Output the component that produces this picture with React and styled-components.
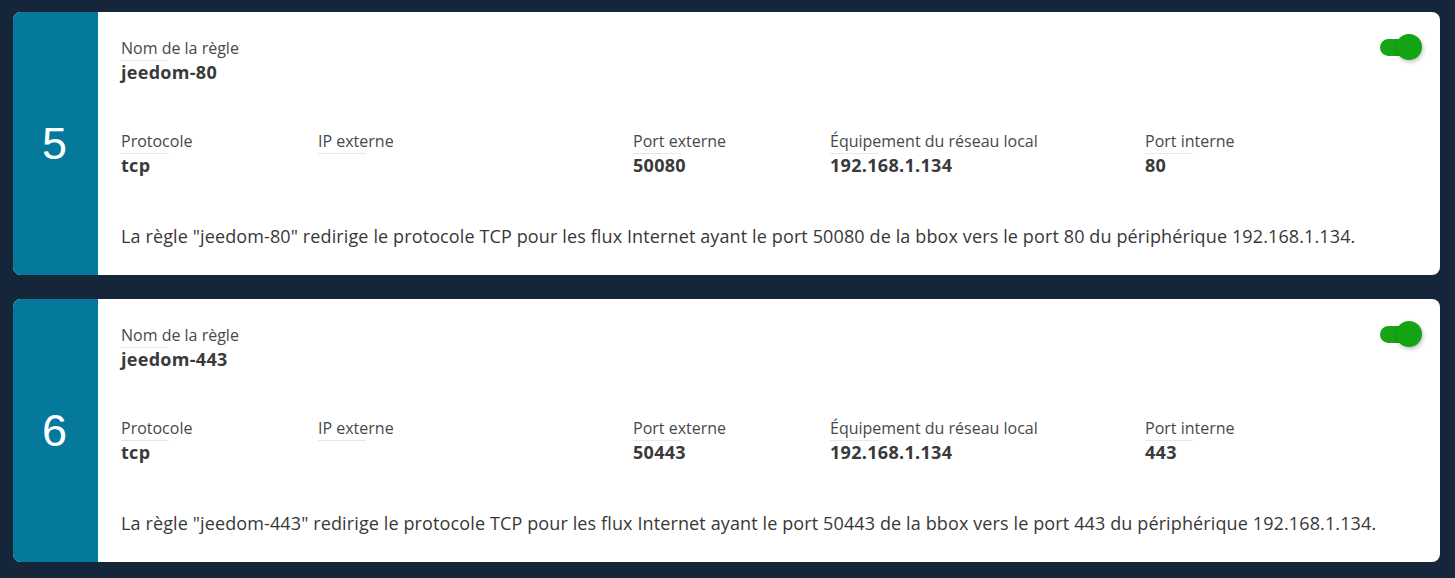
import styled, { createGlobalStyle } from "styled-components";

const GlobalStyle = createGlobalStyle`
  html, body {
    margin: 0;
    padding: 0;
    background: #15263a;
    font-family: "Open Sans", Lato, sans-serif;
  }
`;

const rules = [
  { id: 5, name: "jeedom-80", protocol: "tcp", ipExt: "", portExt: "50080", device: "192.168.1.134", portInt: "80" },
  { id: 6, name: "jeedom-443", protocol: "tcp", ipExt: "", portExt: "50443", device: "192.168.1.134", portInt: "443" },
];

const Page = styled.div`
  display: flex;
  flex-direction: column;
  gap: 24px;
  padding: 12px 15px 16px 13px;
`;

const Card = styled.div`
  display: flex;
  height: 263px;
  background: #fff;
  border-radius: 8px;
  overflow: hidden;
`;

const Band = styled.div`
  width: 83px;
  flex-shrink: 0;
  background: #04799b;
  color: #fff;
  display: flex;
  align-items: center;
  justify-content: center;
  font-family: "Liberation Sans", Arial, sans-serif;
  font-size: 45px;
  padding-right: 2px;
`;

const Body = styled.div`
  position: relative;
  flex: 1;
  padding: 26px 25px 0 23px;
`;

const Grid = styled.div`
  display: grid;
  grid-template-columns: 197px 315px 197px 315px 1fr;
  margin-top: ${({ $top }) => $top || 0}px;
`;

const Field = styled.div`
  display: flex;
  flex-direction: column;
`;

const Label = styled.span`
  position: relative;
  font-size: 16px;
  color: #484848;
  line-height: 20px;
  padding-bottom: 3px;

  &::after {
    content: "";
    position: absolute;
    left: 0;
    bottom: 0;
    width: 48px;
    height: 1px;
    background: #e8e8e8;
  }
`;

const Value = styled.span`
  font-size: 18px;
  font-weight: 700;
  color: #3a3a3a;
  line-height: 22px;
  min-height: 22px;
  letter-spacing: 0.3px;
`;

const Sentence = styled.p`
  margin: 48px 0 0;
  font-size: 18px;
  line-height: 24px;
  color: #383838;
  letter-spacing: 0.12px;
`;

const Toggle = styled.div`
  position: absolute;
  top: 22px;
  right: 18px;
  width: 42px;
  height: 26px;
`;

const Track = styled.span`
  position: absolute;
  left: 0;
  top: 5px;
  width: 34px;
  height: 17px;
  border-radius: 9px;
  background: #17a417;
`;

const Knob = styled.span`
  position: absolute;
  right: 0;
  top: 0;
  width: 26px;
  height: 26px;
  border-radius: 50%;
  background: #13a313;
  box-shadow: 1px 2px 4px rgba(0, 0, 0, 0.25);
`;

const Rule = ({ r }) => (
  <Card>
    <Band>{r.id}</Band>
    <Body>
      <Toggle>
        <Track />
        <Knob />
      </Toggle>
      <Grid>
        <Field>
          <Label>Nom de la règle</Label>
          <Value>{r.name}</Value>
        </Field>
      </Grid>
      <Grid $top={48}>
        <Field>
          <Label>Protocole</Label>
          <Value>{r.protocol}</Value>
        </Field>
        <Field>
          <Label>IP externe</Label>
          <Value>{r.ipExt}</Value>
        </Field>
        <Field>
          <Label>Port externe</Label>
          <Value>{r.portExt}</Value>
        </Field>
        <Field>
          <Label>Équipement du réseau local</Label>
          <Value>{r.device}</Value>
        </Field>
        <Field>
          <Label>Port interne</Label>
          <Value>{r.portInt}</Value>
        </Field>
      </Grid>
      <Sentence>
        La règle "{r.name}" redirige le protocole TCP pour les flux Internet ayant le port {r.portExt} de la bbox vers le port {r.portInt} du périphérique {r.device}.
      </Sentence>
    </Body>
  </Card>
);

export default function App() {
  return (
    <>
      <GlobalStyle />
      <Page>
        {rules.map((r) => (
          <Rule key={r.id} r={r} />
        ))}
      </Page>
    </>
  );
}
